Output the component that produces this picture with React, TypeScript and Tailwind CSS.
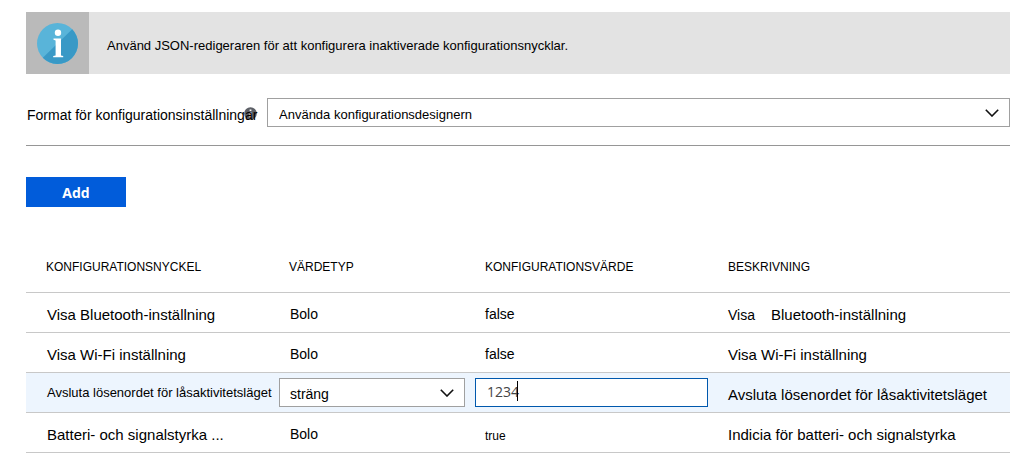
import React from "react";
import clsx from "clsx";

interface ISetting {
  key: string;
  type: string;
  value: string;
  description: React.ReactNode;
  editing?: boolean;
  smallValue?: boolean;
}

const settings: ISetting[] = [
  {
    key: "Visa Bluetooth-inställning",
    type: "Bolo",
    value: "false",
    description: (
      <>
        <span className="mr-4 text-[14px]">Visa</span>
        <span>Bluetooth-inställning</span>
      </>
    ),
  },
  {
    key: "Visa Wi-Fi inställning",
    type: "Bolo",
    value: "false",
    description: "Visa Wi-Fi inställning",
  },
  {
    key: "Avsluta lösenordet för låsaktivitetsläget",
    type: "sträng",
    value: "1234",
    description: "Avsluta lösenordet för låsaktivitetsläget",
    editing: true,
  },
  {
    key: "Batteri- och signalstyrka ...",
    type: "Bolo",
    value: "true",
    description: "Indicia för batteri- och signalstyrka",
    smallValue: true,
  },
];

const Chevron: React.FC<{ className?: string }> = ({ className }) => (
  <svg
    className={clsx("pointer-events-none absolute h-2 w-[14px]", className)}
    viewBox="0 0 14 8"
    fill="none"
    stroke="#111"
    strokeWidth="1.6"
    aria-hidden="true"
  >
    <path d="M0.8 0.8 L7 7 L13.2 0.8" />
  </svg>
);

const InfoBanner: React.FC = () => (
  <div className="flex h-[62px] bg-[#e3e3e3]">
    <div className="flex w-[63px] shrink-0 items-center justify-center bg-[#bababa]">
      <svg className="h-[41px] w-[41px]" viewBox="0 0 41 41" aria-hidden="true">
        <circle cx="20.5" cy="20.5" r="20.5" fill="#59b4d9" />
        <path d="M35.2 6.2 A20.5 20.5 0 0 1 5.8 34.8 Z" fill="#3999c6" />
        <circle cx="21" cy="9.8" r="3.2" fill="#fff" />
        <path
          d="M16.5 15.6 H24 V32.4 L26.2 33 V34.2 H16.2 V33 L18.6 32.4 V17.4 L16.5 16.8 Z"
          fill="#fff"
        />
      </svg>
    </div>
    <p className="self-center pt-1.5 pl-[18px] text-[13px]">
      Använd JSON-redigeraren för att konfigurera inaktiverade
      konfigurationsnycklar.
    </p>
  </div>
);

const FormatField: React.FC = () => (
  <div className="mt-6 flex items-center gap-1">
    <div className="relative w-[237px] shrink-0 pt-1 pl-px">
      <svg
        className="absolute top-2 right-[6px] h-[13px] w-[13px]"
        viewBox="0 0 13 13"
        aria-hidden="true"
      >
        <circle cx="6.5" cy="6.5" r="6.3" fill="#5c5f66" />
        <path d="M5.6 2.4 H7.4 V4 H5.6 Z M5.6 5.2 H7.4 V10.4 H5.6 Z" fill="#fff" />
      </svg>
      <label htmlFor="format" className="relative text-[14px]">
        Format för konfigurationsinställningar
      </label>
    </div>
    <div className="relative flex-1">
      <select
        id="format"
        className="block h-[29px] w-full appearance-none border border-[#a0a0a0] bg-white pt-1 pl-[11px] text-[13px]"
      >
        <option>Använda konfigurationsdesignern</option>
      </select>
      <Chevron className="top-[11px] right-[11px]" />
    </div>
  </div>
);

const SettingRow: React.FC<{ setting: ISetting }> = ({ setting }) => {
  const [value, setValue] = React.useState<string>(setting.value);

  return (
    <tr
      className={clsx(
        "h-10 border-b border-[#c8c8c8]",
        setting.editing && "bg-[#edf5fe]"
      )}
    >
      <td
        className={clsx(
          "pl-[21px] whitespace-nowrap",
          setting.editing ? "pt-0.5 text-[13px]" : "pt-1.5 text-[15px]"
        )}
      >
        {setting.key}
      </td>
      {setting.editing ? (
        <>
          <td className="pr-[10px]">
            <div className="relative">
              <select
                aria-label="Värdetyp"
                className="block h-[29px] w-full appearance-none border border-[#a0a0a0] bg-white pt-1 pl-[10px] text-[14px]"
              >
                <option>{setting.type}</option>
              </select>
              <Chevron className="top-[11px] right-[11px]" />
            </div>
          </td>
          <td className="pr-5">
            <div className="relative">
              <input
                type="text"
                aria-label="Konfigurationsvärde"
                value={value}
                onChange={(e) => setValue(e.target.value)}
                className="block h-[29px] w-full border border-[#0058ad] bg-white pb-0.5 pl-[11px] font-['Open_Sans',sans-serif] text-[14px] text-[#444] outline-none"
              />
              <span className="absolute top-[3px] left-[42px] h-5 w-px bg-black" />
            </div>
          </td>
        </>
      ) : (
        <>
          <td className="pt-1 pl-[11px] text-[14px]">{setting.type}</td>
          <td
            className={clsx(
              "pl-[10px]",
              setting.smallValue ? "pt-[7px] text-[12px]" : "pt-1 text-[14px]"
            )}
          >
            {setting.value}
          </td>
        </>
      )}
      <td className="pt-1.5 text-[15px] whitespace-nowrap">
        {setting.description}
      </td>
    </tr>
  );
};

export default function App() {
  return (
    <main className="bg-white pt-3 pr-[15px] pb-1 pl-[26px] font-['Liberation_Sans',Arial,sans-serif] text-black">
      <InfoBanner />
      <FormatField />
      <hr className="mt-[18px] border-[#969696]" />
      <button
        type="button"
        className="mt-[31px] block h-[30px] w-[100px] bg-[#015cda] font-['Open_Sans',sans-serif] text-[14px] font-bold text-white"
      >
        Add
      </button>
      <table className="mt-[35px] w-full table-fixed border-collapse">
        <colgroup>
          <col className="w-[253px]" />
          <col className="w-[196px]" />
          <col className="w-[253px]" />
          <col />
        </colgroup>
        <thead>
          <tr className="h-[50px] border-b border-[#c8c8c8] text-left text-[12px]">
            <th className="pl-5 font-normal">KONFIGURATIONSNYCKEL</th>
            <th className="pl-[10px] font-normal">VÄRDETYP</th>
            <th className="pl-[10px] font-normal">KONFIGURATIONSVÄRDE</th>
            <th className="font-normal">BESKRIVNING</th>
          </tr>
        </thead>
        <tbody>
          {settings.map((setting) => (
            <SettingRow key={setting.key} setting={setting} />
          ))}
        </tbody>
      </table>
    </main>
  );
}
